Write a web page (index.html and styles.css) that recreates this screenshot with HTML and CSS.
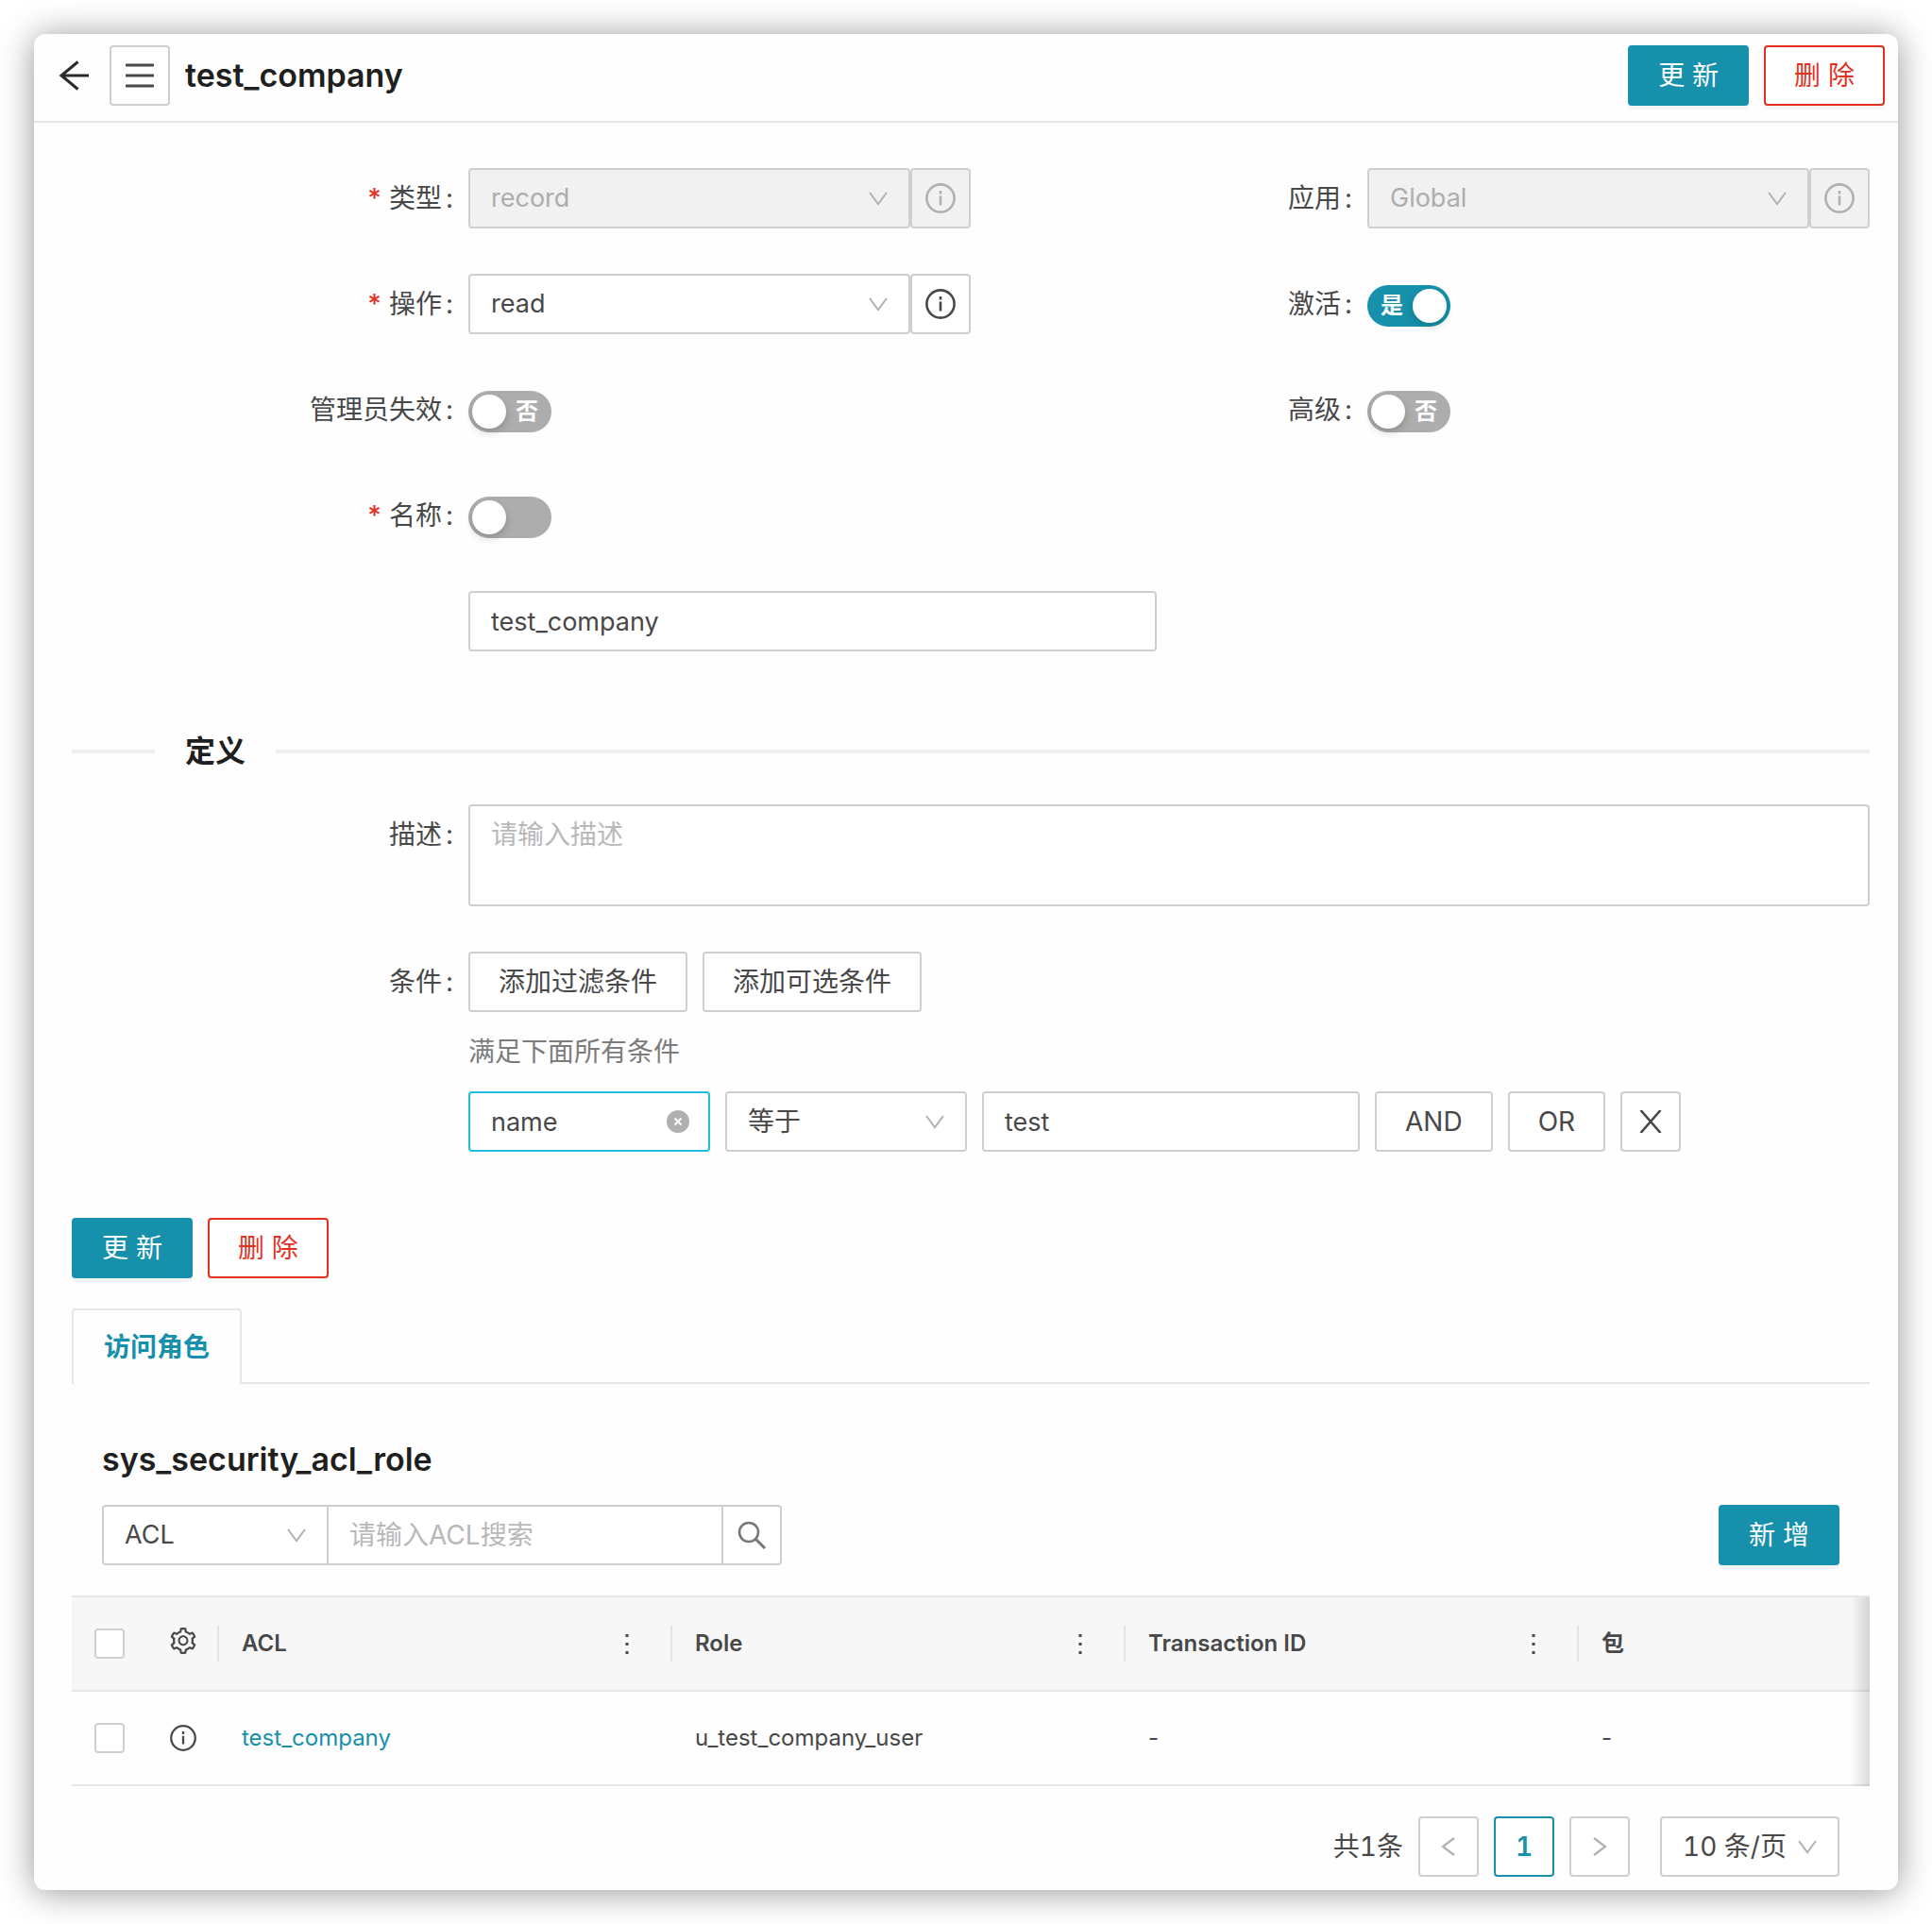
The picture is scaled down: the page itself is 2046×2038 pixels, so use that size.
FILE: index.html
```html
<!DOCTYPE html>
<html lang="zh-CN">
<head>
<meta charset="utf-8">
<title>test_company</title>
<link rel="stylesheet" href="styles.css">
</head>
<body>
<svg class="sprite" aria-hidden="true">
  <symbol id="down" viewBox="0 0 24 24"><path d="M3 6l9 12 9-12" fill="none" stroke="currentColor" stroke-width="2"/></symbol>
  <symbol id="info" viewBox="0 0 32 32"><circle cx="16" cy="16" r="14.6" fill="none" stroke="currentColor" stroke-width="2.6"/><path d="M16 13.5v10M16 8v3.4" stroke="currentColor" stroke-width="2.6"/></symbol>
  <symbol id="dots" viewBox="0 0 20 28"><path d="M8.500 4h3v3h-3zM8.500 13h3v3h-3zM8.500 22h3v3h-3z" fill="currentColor"/></symbol>
</svg>
<main class="card">
  <header class="topbar">
    <button class="back" type="button" aria-label="返回"><svg viewBox="0 0 36 36" width="36" height="36"><path d="M20.500 3.500L3 18l17.500 14.500M3 18h29" fill="none" stroke="currentColor" stroke-width="3"/></svg></button>
    <button class="btn square" type="button" aria-label="菜单"><svg viewBox="0 0 32 32" width="32" height="32"><path d="M1 5h30M1 16h30M1 27h30" stroke="currentColor" stroke-width="3"/></svg></button>
    <h1 class="title">test_company</h1>
    <div class="actions">
      <button class="btn primary" type="button">更 新</button>
      <button class="btn danger" type="button">删 除</button>
    </div>
  </header>

  <div class="content">
    <form class="form">
      <div class="row pair">
        <div class="item">
          <label class="label required" for="type">类型</label>
          <div class="joined">
            <div class="select"><select id="type" disabled><option>record</option></select><svg class="caret"><use href="#down"/></svg></div>
            <button class="btn square" type="button" aria-label="类型详情" disabled><svg width="32" height="32"><use href="#info"/></svg></button>
          </div>
        </div>
        <div class="item">
          <label class="label" for="app">应用</label>
          <div class="joined">
            <div class="select"><select id="app" disabled><option>Global</option></select><svg class="caret"><use href="#down"/></svg></div>
            <button class="btn square" type="button" aria-label="应用详情" disabled><svg width="32" height="32"><use href="#info"/></svg></button>
          </div>
        </div>
      </div>
      <div class="row pair">
        <div class="item">
          <label class="label required" for="op">操作</label>
          <div class="joined">
            <div class="select"><select id="op"><option>read</option></select><svg class="caret"><use href="#down"/></svg></div>
            <button class="btn square" type="button" aria-label="操作详情"><svg width="32" height="32"><use href="#info"/></svg></button>
          </div>
        </div>
        <div class="item">
          <label class="label" for="active">激活</label>
          <div class="switch"><input id="active" type="checkbox" checked><span class="state">是</span></div>
        </div>
      </div>
      <div class="row pair">
        <div class="item">
          <label class="label" for="admin">管理员失效</label>
          <div class="switch"><input id="admin" type="checkbox"><span class="state">否</span></div>
        </div>
        <div class="item">
          <label class="label" for="advanced">高级</label>
          <div class="switch"><input id="advanced" type="checkbox"><span class="state">否</span></div>
        </div>
      </div>
      <div class="row item">
        <label class="label required" for="nameswitch">名称</label>
        <div class="switch"><input id="nameswitch" type="checkbox"></div>
      </div>
      <div class="row item">
        <span></span>
        <input class="field half" type="text" aria-label="名称" value="test_company">
      </div>

      <h2 class="divider">定义</h2>

      <div class="row item">
        <label class="label" for="desc">描述</label>
        <textarea class="field area" id="desc" placeholder="请输入描述"></textarea>
      </div>
      <div class="row item">
        <label class="label" for="cond">条件</label>
        <div class="conditions">
          <div class="line">
            <button class="btn" type="button">添加过滤条件</button>
            <button class="btn" type="button">添加可选条件</button>
          </div>
          <p class="hint">满足下面所有条件</p>
          <div class="line">
            <div class="select focused small"><input class="field" id="cond" type="text" value="name"><button class="clear" type="button" aria-label="清除"><svg viewBox="0 0 24 24" width="24" height="24"><circle cx="12" cy="12" r="12" fill="#b0b0b0"/><path d="M8.500 8.500l7 7M15.500 8.500l-7 7" stroke="#fff" stroke-width="2"/></svg></button></div>
            <div class="select small"><select class="cjk" aria-label="运算符"><option>等于</option></select><svg class="caret"><use href="#down"/></svg></div>
            <input class="field value" type="text" aria-label="值" value="test">
            <button class="btn" type="button">AND</button>
            <button class="btn" type="button">OR</button>
            <button class="btn square" type="button" aria-label="移除条件"><svg viewBox="0 0 24 24" width="24" height="24"><path d="M1.500 0l21 24M22.500 0l-21 24" stroke="currentColor" stroke-width="2.600"/></svg></button>
          </div>
        </div>
      </div>
    </form>

    <div class="footer-actions">
      <button class="btn primary" type="button">更 新</button>
      <button class="btn danger" type="button">删 除</button>
    </div>

    <nav class="tabs"><a class="tab" href="#roles">访问角色</a></nav>

    <section id="roles">
      <h2 class="list-title">sys_security_acl_role</h2>
      <div class="toolbar">
        <div class="search">
          <div class="select"><select aria-label="搜索字段"><option>ACL</option></select><svg class="caret"><use href="#down"/></svg></div>
          <input class="field query" type="text" aria-label="搜索" placeholder="请输入ACL搜索">
          <button class="btn square muted" type="button" aria-label="搜索"><svg viewBox="0 0 32 32" width="32" height="32"><circle cx="13" cy="13" r="10" fill="none" stroke="currentColor" stroke-width="2.600"/><path d="M20 20l10 10" stroke="currentColor" stroke-width="3"/></svg></button>
        </div>
        <button class="btn primary" type="button">新 增</button>
      </div>

      <div class="table-wrap">
        <table class="table">
          <colgroup><col class="c-check"><col class="c-icon"><col class="c-data"><col class="c-data"><col class="c-data"><col></colgroup>
          <thead>
            <tr>
              <th><input class="check" type="checkbox" aria-label="全选"></th>
              <th class="settings"><button class="icon-btn" type="button" aria-label="设置"><svg viewBox="64 64 896 896" width="28" height="28" fill="currentColor"><path d="M924.8 625.7l-65.500-56c3.100-19 4.700-38.400 4.700-57.800s-1.600-38.800-4.700-57.800l65.500-56a32.030 32.030 0 009.300-35.200l-.9-2.600a443.740 443.740 0 00-79.700-137.900l-1.800-2.100a32.120 32.120 0 00-35.100-9.500l-81.300 28.900c-30-24.600-63.500-44-99.700-57.600l-15.700-85a32.050 32.050 0 00-25.800-25.700l-2.700-.5c-52.100-9.400-106.900-9.400-159 0l-2.700.5a32.050 32.050 0 00-25.800 25.700l-15.800 85.400a351.860 351.860 0 00-99 57.400l-81.900-29.100a32 32 0 00-35.100 9.500l-1.800 2.100a446.020 446.020 0 00-79.700 137.900l-.9 2.600c-4.500 12.500-.8 26.500 9.300 35.200l66.300 56.600c-3.100 18.800-4.600 38-4.600 57.100 0 19.200 1.500 38.400 4.600 57.100L99 625.500a32.030 32.030 0 00-9.300 35.200l.9 2.600c18.100 50.400 44.900 96.900 79.700 137.900l1.800 2.100a32.120 32.120 0 0035.100 9.500l81.900-29.100c29.800 24.500 63.100 43.900 99 57.400l15.800 85.400a32.050 32.050 0 0025.800 25.700l2.700.5a449.400 449.400 0 00159 0l2.700-.5a32.050 32.050 0 0025.800-25.700l15.700-85a350 350 0 0099.700-57.600l81.300 28.900a32 32 0 0035.100-9.500l1.800-2.100c34.800-41.100 61.600-87.500 79.700-137.900l.9-2.600c4.500-12.300.8-26.300-9.300-35zM788.300 465.900c2.500 15.100 3.800 30.600 3.800 46.100s-1.300 31-3.800 46.100l-6.600 40.100 74.700 63.900a370.030 370.030 0 01-42.600 73.600L721 702.800l-31.400 25.800c-23.900 19.600-50.500 35-79.300 45.800l-38.100 14.300-17.900 97a377.500 377.500 0 01-85 0l-17.900-97.200-37.800-14.500c-28.500-10.800-55-26.200-78.700-45.700l-31.400-25.900-93.400 33.200c-17-22.900-31.200-47.600-42.600-73.600l75.500-64.500-6.500-40c-2.400-14.900-3.700-30.300-3.700-45.500 0-15.300 1.200-30.600 3.700-45.500l6.500-40-75.500-64.500c11.300-26.100 25.600-50.700 42.600-73.600l93.400 33.200 31.400-25.900c23.700-19.500 50.200-34.900 78.700-45.700l37.900-14.300 17.900-97.200c28.100-3.200 56.800-3.200 85 0l17.900 97 38.100 14.300c28.700 10.800 55.400 26.200 79.300 45.800l31.400 25.800 92.800-32.900c17 22.900 31.200 47.600 42.600 73.600L781.800 426l6.500 39.900zM512 326c-97.200 0-176 78.800-176 176s78.800 176 176 176 176-78.800 176-176-78.800-176-176-176zm79.200 255.200A111.600 111.600 0 01512 614c-29.900 0-58-11.700-79.200-32.800A111.600 111.600 0 01400 502c0-29.900 11.700-58 32.800-79.200C454 401.600 482.100 390 512 390c29.900 0 58 11.600 79.200 32.800A111.600 111.600 0 01624 502c0 29.900-11.700 58-32.800 79.200z"/></svg></button></th>
              <th><div class="head">ACL<button class="icon-btn more" type="button" aria-label="ACL 列菜单"><svg width="20" height="28"><use href="#dots"/></svg></button></div></th>
              <th><div class="head">Role<button class="icon-btn more" type="button" aria-label="Role 列菜单"><svg width="20" height="28"><use href="#dots"/></svg></button></div></th>
              <th><div class="head">Transaction ID<button class="icon-btn more" type="button" aria-label="Transaction ID 列菜单"><svg width="20" height="28"><use href="#dots"/></svg></button></div></th>
              <th><div class="head">包</div></th>
            </tr>
          </thead>
          <tbody>
            <tr>
              <td><input class="check" type="checkbox" aria-label="选择 test_company"></td>
              <td><button class="icon-btn" type="button" aria-label="详情"><svg width="28" height="28"><use href="#info"/></svg></button></td>
              <td class="text"><a href="#test_company">test_company</a></td>
              <td class="text">u_test_company_user</td>
              <td class="text">-</td>
              <td class="text">-</td>
            </tr>
          </tbody>
        </table>
      </div>

      <div class="pager">
        <span>共1条</span>
        <button class="btn square faint" type="button" aria-label="上一页"><svg viewBox="0 0 24 24" width="24" height="24"><path d="M18 3L6 12l12 9" fill="none" stroke="currentColor" stroke-width="2.200"/></svg></button>
        <button class="btn square current" type="button">1</button>
        <button class="btn square faint" type="button" aria-label="下一页"><svg viewBox="0 0 24 24" width="24" height="24"><path d="M6 3l12 9-12 9" fill="none" stroke="currentColor" stroke-width="2.200"/></svg></button>
        <div class="select size"><select class="cjk" aria-label="每页条数"><option>10 条/页</option></select><svg class="caret"><use href="#down"/></svg></div>
      </div>
    </section>
  </div>
</main>
</body>
</html>
```
FILE: styles.css
```css
:root {
  --primary: #1790ac;
  --danger: #e2321f;
  --border: #cfcfcf;
  --line: #e6e6e6;
  --text: #484848;
  --heading: #1f1f1f;
  --faint: #b0b0b0;
}

* { box-sizing: border-box; }

body {
  margin: 0;
  padding: 36px;
  background: #fff;
  color: var(--text);
  font: 28px/44px Inter, "Noto Sans CJK SC", sans-serif;
}

button, input, select, textarea { font: inherit; color: inherit; margin: 0; }
h1, h2, p { margin: 0; }
svg { display: block; flex: none; }
a { color: var(--primary); text-decoration: none; }
.sprite { position: absolute; width: 0; height: 0; }

.card {
  background: #fefefe;
  border-radius: 12px;
  box-shadow: 0 2px 36px rgba(0, 0, 0, 0.42);
  padding-bottom: 14px;
}

/* top bar */
.topbar {
  display: flex;
  align-items: center;
  gap: 16px;
  padding: 12px 14px 16px 26px;
  border-bottom: 2px solid var(--line);
}
.back { border: 0; padding: 0; background: none; color: #2a2a2a; width: 38px; }
.title { font-size: 34px; line-height: 48px; font-weight: 600; color: var(--heading); }
.actions { display: flex; gap: 16px; margin-left: auto; }

/* buttons */
.btn {
  display: flex;
  align-items: center;
  justify-content: center;
  height: 64px;
  padding: 0 30px;
  border: 2px solid var(--border);
  border-radius: 4px;
  background: #fff;
  white-space: nowrap;
}
.btn.square { width: 64px; padding: 0; flex: none; }
.btn.primary { background: var(--primary); border-color: var(--primary); color: #fff; box-shadow: 0 4px 0 rgba(0, 0, 0, 0.04); }
.btn.danger { border-color: var(--danger); color: var(--danger); box-shadow: 0 4px 0 rgba(0, 0, 0, 0.03); }
.btn.muted { color: #777; }
.btn.faint { color: var(--faint); }
.btn.current { border-color: var(--primary); color: var(--primary); font-weight: 600; }
.btn:disabled { background: #f1f1f1; color: var(--faint); }
.icon-btn { border: 0; padding: 0; background: none; display: block; }

/* fields */
.field, .select select {
  width: 100%;
  height: 64px;
  padding: 0 22px;
  border: 2px solid var(--border);
  border-radius: 4px;
  background: #fff;
  font-size: 27px;
  appearance: none;
  outline: 0;
}
.select { position: relative; }
.select select:disabled { background: #f1f1f1; color: #adadad; opacity: 1; }
.select select.cjk { font-size: 28px; }
.caret { position: absolute; right: 22px; top: 20px; width: 24px; height: 24px; color: var(--faint); pointer-events: none; }
.focused .field { border-color: #22bcdc; }
.clear { position: absolute; right: 22px; top: 20px; border: 0; padding: 0; background: none; }
.field::placeholder { color: #b8b8b8; font-size: 28px; }
.field.half { width: calc(50% - 13px); }
.field.area { height: 108px; padding: 8px 22px; resize: none; display: block; font-size: 28px; }

/* form */
.content { padding: 48px 30px 0 40px; }
.form { display: flex; flex-direction: column; gap: 48px; }
.row { min-height: 64px; }
.pair { display: grid; grid-template-columns: 1fr 1fr; }
.item { display: grid; grid-template-columns: 420px minmax(0, 1fr); }
.label { line-height: 64px; text-align: right; padding-right: 16px; }
.label::after { content: ":"; margin-left: 4px; }
.label.required::before { content: "*"; color: var(--danger); margin-right: 8px; font-weight: 500; }
.joined { display: flex; }
.joined .select { flex: 1; }

.switch { position: relative; width: 88px; height: 44px; align-self: center; top: 2px; }
.switch input {
  appearance: none;
  display: block;
  width: 88px;
  height: 44px;
  border-radius: 22px;
  background: #adadad;
}
.switch input::before {
  content: "";
  display: block;
  width: 36px;
  height: 36px;
  border-radius: 50%;
  background: #fff;
  box-shadow: 0 4px 8px rgba(0, 35, 11, 0.2);
  transform: translate(4px, 4px);
}
.switch input:checked { background: var(--primary); }
.switch input:checked::before { transform: translate(48px, 4px); }
.state { position: absolute; top: 0; right: 14px; font-size: 24px; font-weight: 600; color: #fff; pointer-events: none; }
.switch input:checked + .state { right: auto; left: 14px; }

.divider {
  display: flex;
  align-items: center;
  gap: 32px;
  margin: 32px 0 -18px;
  font-size: 32px;
  line-height: 52px;
  font-weight: 600;
  color: var(--heading);
}
.divider::before, .divider::after { content: ""; height: 4px; background: #f0f0f0; }
.divider::before { width: 88px; }
.divider::after { flex: 1; }

.conditions { display: flex; flex-direction: column; gap: 20px; }
.line { display: flex; gap: 16px; }
.hint { color: #7c7c7c; }
.small { width: 256px; }
.field.value { width: 400px; }

.footer-actions { display: flex; gap: 16px; margin: 70px 0 32px; }

/* tabs */
.tabs { display: flex; height: 80px; }
.tabs::after { content: ""; flex: 1; border-bottom: 2px solid var(--line); }
.tab {
  padding: 0 32px;
  line-height: 78px;
  border: 2px solid var(--line);
  border-bottom: 0;
  border-radius: 4px 4px 0 0;
  font-weight: 700;
}

/* related list */
.list-title { margin: 56px 32px 24px; font-size: 34px; line-height: 48px; font-weight: 600; color: var(--heading); }
.toolbar { display: flex; justify-content: space-between; margin: 0 32px 32px; }
.search { display: flex; }
.search .select { width: 240px; }
.search .query { width: 420px; margin: 0 -2px; border-radius: 0; }
.search .select select { border-radius: 4px 0 0 4px; }
.search .btn { border-radius: 0 4px 4px 0; }

.table-wrap { position: relative; border-top: 2px solid var(--line); }
.table-wrap::after {
  content: "";
  position: absolute;
  top: 0;
  right: 0;
  bottom: 0;
  width: 20px;
  background: linear-gradient(to right, rgba(0, 0, 0, 0), rgba(0, 0, 0, 0.14));
  pointer-events: none;
}
.table { width: 100%; table-layout: fixed; border-collapse: separate; border-spacing: 0; font-size: 24px; line-height: 38px; }
.c-check { width: 80px; }
.c-icon { width: 74px; }
.c-data { width: 480px; }
.table th, .table td { height: 100px; padding: 0; border-bottom: 2px solid var(--line); text-align: left; font-weight: 400; }
.table th { background: #f7f7f7; font-weight: 600; }
.table th:nth-child(-n+2), .table td:nth-child(-n+2) { padding-left: 24px; }
.table th.settings { padding-bottom: 6px; }
.table td.text { padding-left: 26px; }
.head { display: flex; align-items: center; height: 38px; border-left: 2px solid #e3e3e3; padding-left: 24px; }
.more { margin-left: auto; margin-right: 36px; }
.check {
  appearance: none;
  display: block;
  width: 32px;
  height: 32px;
  border: 2px solid var(--border);
  border-radius: 4px;
  background: #fff;
}

/* pagination */
.pager { display: flex; align-items: center; gap: 16px; margin: 32px 32px 0; font-variant-numeric: tabular-nums; }
.pager span { margin-left: auto; }
.size { width: 190px; margin-left: 16px; }
```
